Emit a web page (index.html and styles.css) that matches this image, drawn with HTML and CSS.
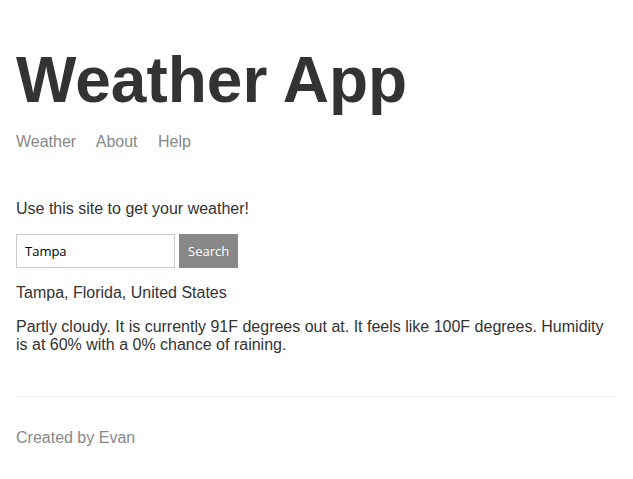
FILE: index.html
```html
<!DOCTYPE html>
<html>
<head>
<meta charset="utf-8">
<title>Weather</title>
<link rel="stylesheet" href="styles.css">
</head>
<body>
<div class="main-content">
  <header>
    <h1>Weather App</h1>
    <div>
      <a href="#">Weather</a>
      <a href="#">About</a>
      <a href="#">Help</a>
    </div>
  </header>
  <p>Use this site to get your weather!</p>
  <form class="search">
    <input class="search-input" value="Tampa" placeholder="Location">
    <button class="search-button" type="button">Search</button>
  </form>
  <p class="message-1">Tampa, Florida, United States</p>
  <p class="message-2">Partly cloudy. It is currently 91F degrees out at. It feels like 100F degrees. Humidity is at 60% with a 0% chance of raining.</p>
</div>
<footer class="footer">
  <p>Created by Evan</p>
</footer>
</body>
</html>
```
FILE: styles.css
```css
body {
  color: #333333;
  font-family: "Liberation Sans", Arial, sans-serif;
  font-size: 16px;
  max-width: 650px;
  margin: 0 auto;
  padding: 0 16px;
}

header {
  margin-top: 16px;
  margin-bottom: 49px;
}

h1 {
  font-size: 64px;
  margin: 0.67em 0 16px;
}

header a {
  color: #888888;
  margin-right: 16px;
  text-decoration: none;
}

.search {
  display: flex;
  gap: 4px;
}

.search-input {
  box-sizing: border-box;
  height: 34px;
  border: 1px solid #cccccc;
  padding: 8px;
  width: 159px;
  font-family: "Open Sans", "Noto Sans", sans-serif;
  font-size: 13px;
  color: #000;
  margin: 0;
}

.search-button {
  box-sizing: border-box;
  height: 34px;
  border: 1px solid #888888;
  background: #888888;
  color: #ffffff;
  padding: 0 8px;
  font-family: "Open Sans", "Noto Sans", sans-serif;
  font-size: 13px;
  margin: 0;
}

.message-2 {
  line-height: 18px;
}

.footer {
  color: #888888;
  border-top: 1px solid #eeeeee;
  margin-top: 42px;
  padding: 16px 0;
}
```
